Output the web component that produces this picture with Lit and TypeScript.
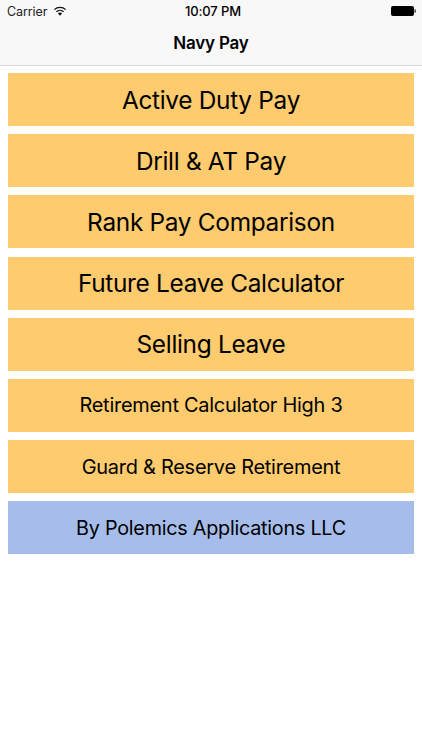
import { LitElement, html, css } from "lit";
import { customElement } from "lit/decorators.js";

const items: [string, string, string][] = [
  ["Active Duty Pay", "orange", "lg"],
  ["Drill & AT Pay", "orange", "lg"],
  ["Rank Pay Comparison", "orange", "lg"],
  ["Future Leave Calculator", "orange", "lg"],
  ["Selling Leave", "orange", "lg"],
  ["Retirement Calculator High 3", "orange", "sm"],
  ["Guard & Reserve Retirement", "orange", "sm"],
  ["By Polemics Applications LLC", "blue", "md"],
];

@customElement("app-root")
export class AppRoot extends LitElement {
  static styles = css`
    :host {
      display: block;
      width: 422px;
      height: 750px;
      background: #fff;
      font-family: Inter, "Liberation Sans", sans-serif;
      color: #000;
      overflow: hidden;
    }
    .top {
      height: 66px;
      box-sizing: border-box;
      background: #f8f8f8;
      border-bottom: 1px solid #d8d8d8;
      display: flex;
      flex-direction: column;
    }
    .status {
      height: 22px;
      display: grid;
      grid-template-columns: 1fr auto 1fr;
      align-items: center;
      padding: 0 6px 0 7px;
      font-size: 12.5px;
      letter-spacing: -0.1px;
    }
    .left {
      display: flex;
      align-items: center;
      gap: 6px;
      color: #222;
    }
    .time {
      font-size: 13px;
      font-weight: 500;
      padding-left: 3px;
    }
    .right {
      display: flex;
      justify-content: flex-end;
    }
    .title {
      flex: 1;
      display: flex;
      align-items: center;
      justify-content: center;
      font-size: 17px;
      font-weight: 600;
      letter-spacing: -0.2px;
      padding-bottom: 1px;
    }
    .list {
      display: flex;
      flex-direction: column;
      gap: 8.2px;
      padding: 7px 8.3px 0 8.3px;
    }
    .btn {
      height: 53px;
      display: flex;
      align-items: center;
      justify-content: center;
      white-space: nowrap;
    }
    .orange { background: #fecb6e; }
    .blue { background: #a6bdec; }
    .lg { font-size: 24.4px; letter-spacing: -0.3px; }
    .md { font-size: 19.8px; letter-spacing: -0.25px; }
    .sm { font-size: 19.95px; letter-spacing: -0.25px; }
  `;

  render() {
    return html`
      <div class="top">
        <div class="status">
          <div class="left">
            <span>Carrier</span>
            <svg width="14" height="10" viewBox="0 0 14 10" aria-hidden="true">
              <path d="M7 9.8 4.9 7.4a3.1 3.1 0 0 1 4.2 0Z" fill="#111" />
              <path d="M3.4 5.8a5.2 5.2 0 0 1 7.2 0" fill="none" stroke="#111" stroke-width="1.3" />
              <path d="M1.3 3.6a8.2 8.2 0 0 1 11.4 0" fill="none" stroke="#111" stroke-width="1.3" />
            </svg>
          </div>
          <div class="time">10:07 PM</div>
          <div class="right">
            <svg width="25" height="10" viewBox="0 0 25 10" aria-hidden="true">
              <rect x="0" y="0" width="23" height="10" rx="2" fill="#000" />
              <rect x="23.5" y="3.2" width="1.3" height="3.6" rx="0.6" fill="#333" />
            </svg>
          </div>
        </div>
        <div class="title">Navy Pay</div>
      </div>
      <div class="list">
        ${items.map(([t, c, s]) => html`<div class="btn ${c} ${s}">${t}</div>`)}
      </div>
    `;
  }
}
